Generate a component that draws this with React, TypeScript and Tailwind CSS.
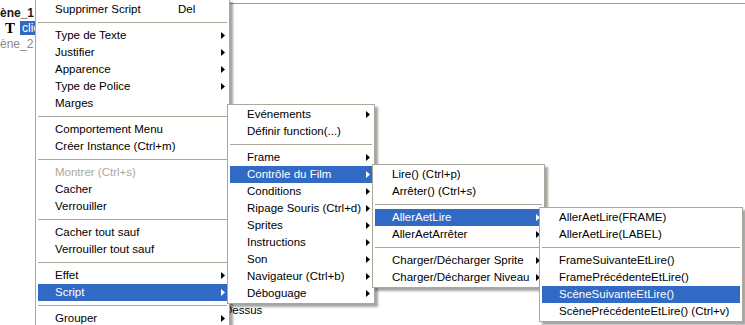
import React from 'react'

type Item = { label: string; sub?: boolean; shortcut?: string; disabled?: boolean; active?: boolean } | 'sep'

const MENU_OBJET: Item[] = [
  { label: 'Supprimer Script', shortcut: 'Del' },
  'sep',
  { label: 'Type de Texte', sub: true },
  { label: 'Justifier', sub: true },
  { label: 'Apparence', sub: true },
  { label: 'Type de Police', sub: true },
  { label: 'Marges' },
  'sep',
  { label: 'Comportement Menu' },
  { label: 'Créer Instance (Ctrl+m)' },
  'sep',
  { label: 'Montrer (Ctrl+s)', disabled: true },
  { label: 'Cacher' },
  { label: 'Verrouiller' },
  'sep',
  { label: 'Cacher tout sauf' },
  { label: 'Verrouiller tout sauf' },
  'sep',
  { label: 'Effet', sub: true },
  { label: 'Script', sub: true, active: true },
  'sep',
  { label: 'Grouper', sub: true },
]

const MENU_SCRIPT: Item[] = [
  { label: 'Evénements', sub: true },
  { label: 'Définir function(...)' },
  'sep',
  { label: 'Frame', sub: true },
  { label: 'Contrôle du Film', sub: true, active: true },
  { label: 'Conditions', sub: true },
  { label: 'Ripage Souris (Ctrl+d)', sub: true },
  { label: 'Sprites', sub: true },
  { label: 'Instructions', sub: true },
  { label: 'Son', sub: true },
  { label: 'Navigateur (Ctrl+b)', sub: true },
  { label: 'Déboguage', sub: true },
]

const MENU_FILM: Item[] = [
  { label: 'Lire() (Ctrl+p)' },
  { label: 'Arrêter() (Ctrl+s)' },
  'sep',
  { label: 'AllerAetLire', sub: true, active: true },
  { label: 'AllerAetArrêter', sub: true },
  'sep',
  { label: 'Charger/Décharger Sprite', sub: true },
  { label: 'Charger/Décharger Niveau', sub: true },
]

const MENU_ALLER: Item[] = [
  { label: 'AllerAetLire(FRAME)' },
  { label: 'AllerAetLire(LABEL)' },
  'sep',
  { label: 'FrameSuivanteEtLire()' },
  { label: 'FramePrécédenteEtLire()' },
  { label: 'ScèneSuivanteEtLire()', active: true },
  { label: 'ScènePrécédenteEtLire() (Ctrl+v)' },
]

function Arrow() {
  return (
    <svg width="4" height="7" viewBox="0 0 4 7" className="shrink-0">
      <path d="M0 0L4 3.5L0 7Z" fill="currentColor" />
    </svg>
  )
}

function Menu({ items, className }: { items: Item[]; className: string }) {
  return (
    <div
      className={
        'absolute bg-white border border-[#aca899] py-[1px] shadow-[3px_3px_2px_rgba(0,0,0,0.35)] ' + className
      }
    >
      {items.map((it, i) =>
        it === 'sep' ? (
          <div key={i} className="h-[9px] flex items-center mx-[2px]">
            <div className="h-px w-full bg-[#aca899]" />
          </div>
        ) : (
          <div
            key={i}
            className={
              'h-[17px] flex items-center mx-[2px] pl-[17px] pr-[2px] whitespace-nowrap ' +
              (it.active ? 'bg-[#316ac5] text-white' : it.disabled ? 'text-[#aca899]' : 'text-black')
            }
          >
            <span className={it.shortcut ? 'w-[123px] shrink-0' : 'flex-1'}>{it.label}</span>
            {it.shortcut && <span>{it.shortcut}</span>}
            {it.sub && <Arrow />}
          </div>
        )
      )}
    </div>
  )
}

export default function App() {
  return (
    <div className="relative w-[745px] h-[325px] overflow-hidden bg-white text-[11.5px] leading-[13px] font-['Liberation_Sans',Arial,sans-serif]">
      <div className="flex h-full">
        {/* arborescence des scènes */}
        <div className="w-[35px] shrink-0 pt-[6px]">
          <div className="font-bold text-[12px] leading-[14px] text-[#1a1a1a]">ène_1</div>
          <div className="flex items-center gap-[5px] pl-[5px] mt-[1px]">
            <span className="font-['Liberation_Serif',serif] font-bold text-[15px] leading-[14px]">T</span>
            <span className="bg-[#316ac5] text-white text-[12px] leading-[14px] px-[2px]">clic</span>
          </div>
          <div className="text-[12px] leading-[14px] text-[#8a8a8a] mt-[2px]">ène_2</div>
        </div>
        {/* zone principale */}
        <div className="flex-1 mt-[3px] border-t border-[#7f9db9]">
          <div className="mt-[300px] pl-[189px] text-black">Dessus</div>
        </div>
      </div>

      <Menu items={MENU_OBJET} className="left-[35px] top-[-1px] w-[195px]" />
      <Menu items={MENU_SCRIPT} className="left-[227px] top-[104px] w-[148px]" />
      <Menu items={MENU_FILM} className="left-[372px] top-[164px] w-[173px]" />
      <Menu items={MENU_ALLER} className="left-[539px] top-[207px] w-[204px]" />
    </div>
  )
}
